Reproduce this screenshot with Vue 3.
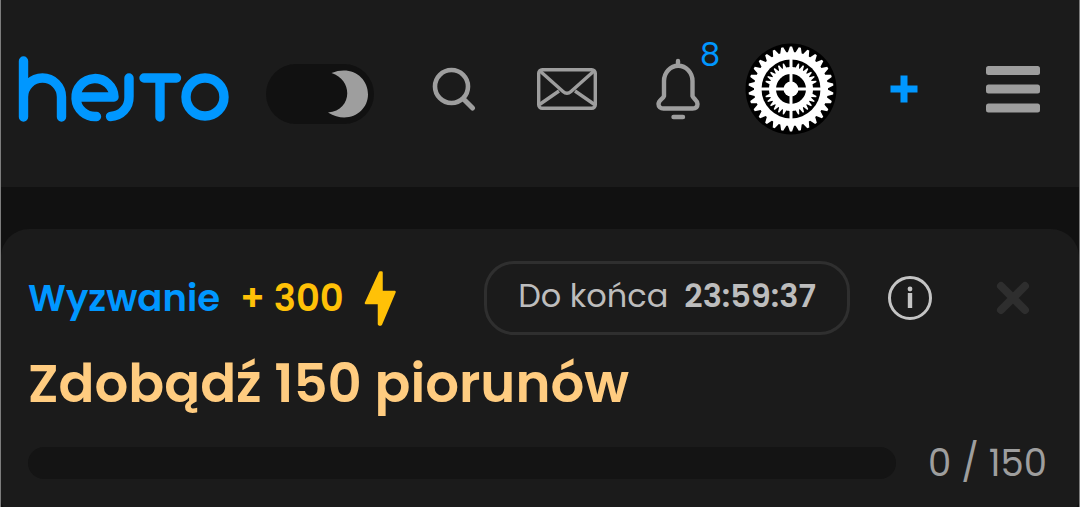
<script setup>
import { ref } from 'vue'

const dark = ref(true)
const unread = 8
const earned = 0
const goal = 150

// Outline of a gear: each tooth rises from the root radius to the tip radius.
function gear(count, root, tip, skip = () => false) {
  const step = (Math.PI * 2) / count
  const at = (r, a) => `${(47 + r * Math.cos(a)).toFixed(2)} ${(47 + r * Math.sin(a)).toFixed(2)}`
  const points = []
  for (let i = 0; i < count; i++) {
    const a = (i + 0.5) * step
    const top = skip(i) ? root : tip
    points.push(at(root, a - step * 0.5), at(root, a - step * 0.4))
    points.push(at(top, a - step * 0.12), at(top, a + step * 0.12), at(root, a + step * 0.4))
  }
  return `M${points.join('L')}Z`
}
const outerGear = gear(30, 37, 42.5)
const innerGear = gear(32, 22, 26.5, (i) => i % 8 === 0 || i % 8 === 7)
</script>

<template>
  <div class="page">
    <header class="topbar">
      <a class="logo" href="#" aria-label="hejto">
        <svg width="211" height="68" viewBox="0 0 211 68" fill="none" stroke="#0097ff" stroke-width="9.4" stroke-linecap="round" stroke-linejoin="round">
          <path d="M5.500 6v56M5.500 42a19 19 0 0 1 38 0v20" />
          <path d="M59 42H96A19 19 0 1 0 78.500 61.500" />
          <path d="M111 23v19A19 19 0 0 1 92.500 61.500" />
          <path d="M126 23h32.500M142 23v39" />
          <circle cx="187" cy="42" r="19" />
        </svg>
      </a>
      <label class="toggle">
        <input v-model="dark" type="checkbox" aria-label="Tryb ciemny" />
        <svg width="42" height="50" viewBox="0 0 42 50"><path d="M4.500 4C24 -4 41 8 41 25.500S21 56 1 43.500C25 42 27 11 4.500 4Z" fill="#9e9e9e" /></svg>
      </label>
      <button class="search" aria-label="Szukaj">
        <svg width="44" height="44" viewBox="0 0 44 44" fill="none" stroke="#9e9e9e" stroke-linecap="round">
          <circle cx="19.500" cy="19.500" r="16.500" stroke-width="4.600" />
          <path d="M31.500 32l9 9" stroke-width="5" />
        </svg>
      </button>
      <button class="mail" aria-label="Wiadomości">
        <svg width="60" height="42" viewBox="0 0 60 42" fill="none" stroke="#9e9e9e" stroke-width="3.400" stroke-linejoin="round">
          <rect x="1.700" y="1.700" width="56.600" height="38.600" rx="3.500" />
          <path d="M3 3l23 20.500q4 3.500 8 0L57 3M2.500 36.500L22 23M57.500 36.500L38 23" />
        </svg>
      </button>
      <button class="bell" aria-label="Powiadomienia">
        <svg width="44" height="62" viewBox="0 0 44 62" fill="none" stroke="#9e9e9e" stroke-width="4.400" stroke-linecap="round" stroke-linejoin="round">
          <path d="M22 3v4M8 38V23a14 15 0 0 1 28.500 0v15c1 3 5 4 5 8 0 3-2 4.500-5 4.500h-29c-3 0-5-1.500-5-4.500 0-4 4.500-5 5.500-8ZM17.500 59h9.500" />
        </svg>
        <span class="badge">{{ unread }}</span>
      </button>
      <button class="avatar" aria-label="Profil">
        <svg width="94" height="94" viewBox="0 0 94 94">
          <circle cx="47" cy="47" r="45.500" fill="#000" />
          <path :d="outerGear" fill="#fff" />
          <circle cx="47" cy="47" r="29.500" fill="#000" />
          <path :d="innerGear" fill="#fff" />
          <circle cx="47" cy="47" r="15" fill="#000" />
          <path d="M47 17v60M17 47h60" stroke="#fff" stroke-width="3" />
          <circle cx="47" cy="47" r="7.500" fill="#fff" />
        </svg>
      </button>
      <button class="add" aria-label="Dodaj">
        <svg width="28" height="28" viewBox="0 0 28 28"><path d="M14 0.500v27M0.500 14h27" stroke="#0097ff" stroke-width="7" /></svg>
      </button>
      <button class="menu" aria-label="Menu">
        <svg width="54" height="48" viewBox="0 0 54 48" fill="#9e9e9e">
          <rect y="1" width="54" height="9" rx="2.500" /><rect y="19.500" width="54" height="9" rx="2.500" /><rect y="38.500" width="54" height="9" rx="2.500" />
        </svg>
      </button>
    </header>

    <main class="card">
      <div class="row">
        <span class="kind">Wyzwanie</span>
        <span class="reward">+ 300</span>
        <svg class="bolt" width="32" height="56" viewBox="0 0 32 56"><path d="M16 2.500L2 33h13v21q1 1 2 0L30.500 22H17.500V2.500Z" fill="#ffc107" stroke="#ffc107" stroke-width="2.500" stroke-linejoin="round" /></svg>
        <div class="timer"><span>Do końca</span><strong>23:59:37</strong></div>
        <button class="info" aria-label="Informacje">
          <svg width="44" height="44" viewBox="0 0 44 44"><circle cx="22" cy="22" r="20.500" fill="none" stroke="#c4c4c4" stroke-width="3" /><path d="M22 17v15" stroke="#c4c4c4" stroke-width="4.400" /><circle cx="22" cy="13" r="2.400" fill="#c4c4c4" /></svg>
        </button>
        <button class="close" aria-label="Zamknij">
          <svg width="34" height="34" viewBox="0 0 34 34"><path d="M5 5l24 24M29 5L5 29" stroke="#2e2e2e" stroke-width="8" stroke-linecap="round" /></svg>
        </button>
      </div>
      <h1>Zdobądź 150 piorunów</h1>
      <div class="status">
        <div class="track" role="progressbar" aria-label="Postęp" :aria-valuenow="earned" aria-valuemin="0" :aria-valuemax="goal">
          <div class="fill" :style="{ width: (earned / goal) * 100 + '%' }"></div>
        </div>
        <span class="count">{{ earned }} / {{ goal }}</span>
      </div>
    </main>
  </div>
</template>

<style>
body { background: #111; }
</style>

<style scoped>
.page {
  min-height: 100vh;
  box-sizing: border-box;
  display: flex;
  flex-direction: column;
  border: solid #7d7d7d;
  border-width: 0 1px;
  background: #111;
  font-family: Poppins, Inter, "Noto Sans", sans-serif;
}
button { border: 0; padding: 0; background: none; font: inherit; cursor: pointer; }
svg { display: block; }
.topbar {
  display: flex;
  align-items: center;
  justify-content: space-between;
  padding: 42px 39px 51px 17px;
  background: #1b1b1b;
}
.toggle {
  display: flex;
  align-items: center;
  justify-content: flex-end;
  width: 108px;
  height: 60px;
  box-sizing: border-box;
  margin-top: 10px;
  padding-right: 5px;
  border-radius: 30px;
  background: #111;
}
.toggle input { appearance: none; width: 1px; height: 1px; margin: 0; }
.search { padding: 0 12px 0 22px; }
.mail { padding: 0 12px; }
.bell { position: relative; padding: 0 4px 0 11px; }
.badge {
  position: absolute;
  right: -16px;
  top: -23px;
  color: #0097ff;
  font-size: 32px;
  line-height: 40px;
  font-weight: 400;
}
.avatar { padding: 0 8px 0 3px; }
.add { padding: 0 16px 0 8px; }
.menu { padding-left: 15px; }
.card {
  flex: 1;
  margin-top: 42px;
  padding: 32px 32px 24px 27px;
  border-radius: 28px 28px 8px 8px;
  background: #1b1b1b;
}
.row { display: flex; align-items: center; }
.kind, .reward { font-size: 37px; line-height: 44px; font-weight: 600; }
.kind { color: #0097ff; }
.reward { margin-left: 20px; color: #ffc107; }
.bolt { margin-left: 20px; }
.timer {
  display: flex;
  justify-content: center;
  gap: 16px;
  margin-left: auto;
  padding: 12px 31px 16px;
  border: 3px solid #2f2f2f;
  border-radius: 30px;
  color: #bdbdbd;
  font-size: 32px;
  line-height: 40px;
  font-weight: 400;
}
.timer strong { font-weight: 600; }
.info { margin-left: 38px; }
.close { margin: 0 17px 0 64px; }
h1 {
  margin: 17px 0 0;
  color: #ffcc80;
  font-size: 53px;
  line-height: 64px;
  font-weight: 600;
}
.status { display: flex; align-items: center; gap: 32px; margin-top: 25px; }
.track { flex: 1; height: 32px; border-radius: 16px; background: #141414; overflow: hidden; }
.fill { height: 100%; background: #ffc107; }
.count { color: #9e9e9e; font-size: 37px; line-height: 44px; font-weight: 400; }
</style>
